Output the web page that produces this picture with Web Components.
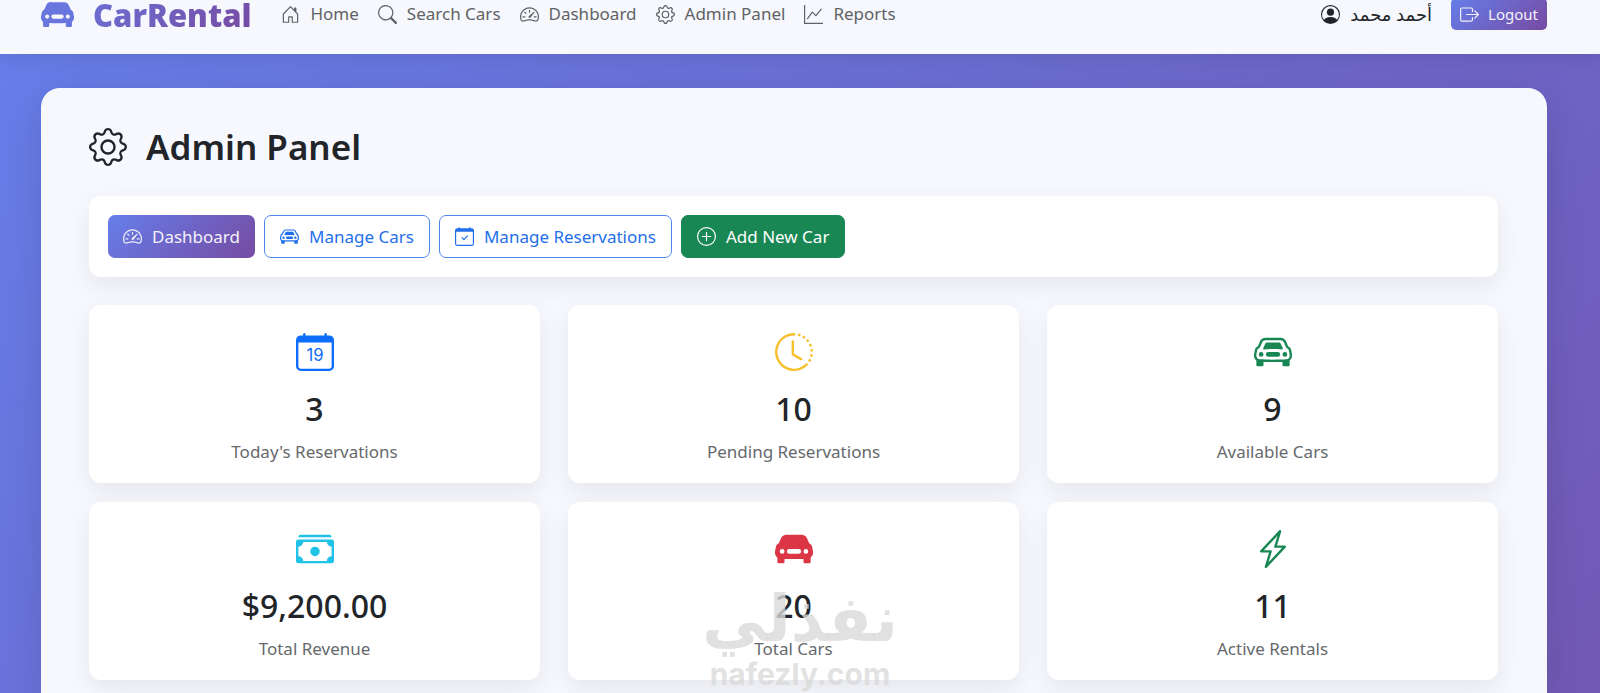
<!DOCTYPE html>
<html lang="en">
<head>
<meta charset="utf-8">
<meta name="viewport" content="width=device-width, initial-scale=1">
<title>CarRental – Admin Panel</title>
<style>
  html, body { margin: 0; }
  body {
    font-family: "Noto Sans", "Open Sans", "DejaVu Sans", sans-serif;
    font-size: 17px;
    line-height: 28px;
    color: #212529;
    background: #764ba2 linear-gradient(135deg, #667eea 0%, #764ba2 100%) 0 0 / 100% 1500px no-repeat;
  }
</style>
</head>
<body>
<rental-app></rental-app>

<script>
const CALENDAR = '<path d="M3.5 0a.5.5 0 0 1 .5.5V1h8V.5a.5.5 0 0 1 1 0V1h1a2 2 0 0 1 2 2v11a2 2 0 0 1-2 2H2a2 2 0 0 1-2-2V3a2 2 0 0 1 2-2h1V.5a.5.5 0 0 1 .5-.5M1 4v10a1 1 0 0 0 1 1h12a1 1 0 0 0 1-1V4z"/>';
const CAR_BODY = 'M2.52 3.515A2.5 2.5 0 0 1 4.82 2h6.362c1 0 1.904.596 2.298 1.515l.792 1.848c.075.175.21.319.38.404.5.25.855.715.965 1.262l.335 1.679q.05.242.049.49v.413c0 .814-.39 1.543-1 1.997V13.5a.5.5 0 0 1-.5.5h-2a.5.5 0 0 1-.5-.5v-1.338c-1.292.048-2.745.088-4 .088s-2.708-.04-4-.088V13.5a.5.5 0 0 1-.5.5h-2a.5.5 0 0 1-.5-.5v-1.892c-.61-.454-1-1.183-1-1.997v-.413a2.5 2.5 0 0 1 .049-.49l.335-1.68c.11-.546.465-1.012.964-1.261a.8.8 0 0 0 .381-.404l.792-1.848Z';
const ICONS = {
  house: '<path d="M8.354 1.146a.5.5 0 0 0-.708 0l-6 6A.5.5 0 0 0 1.5 7.5v7a.5.5 0 0 0 .5.5h4.5a.5.5 0 0 0 .5-.5v-4h2v4a.5.5 0 0 0 .5.5H14a.5.5 0 0 0 .5-.5v-7a.5.5 0 0 0-.146-.354L13 5.793V2.5a.5.5 0 0 0-.5-.5h-1a.5.5 0 0 0-.5.5v1.293zM2.5 14V7.707l5.5-5.5 5.5 5.5V14H10v-4a.5.5 0 0 0-.5-.5h-3a.5.5 0 0 0-.5.5v4z"/>',
  search: '<path d="M11.742 10.344a6.5 6.5 0 1 0-1.397 1.398h-.001q.044.06.098.115l3.85 3.85a1 1 0 0 0 1.415-1.414l-3.85-3.85a1 1 0 0 0-.115-.1zM12 6.5a5.5 5.5 0 1 1-11 0 5.5 5.5 0 0 1 11 0"/>',
  speedometer: '<path d="M8 4a.5.5 0 0 1 .5.5V6a.5.5 0 0 1-1 0V4.5A.5.5 0 0 1 8 4M3.732 5.732a.5.5 0 0 1 .707 0l.915.914a.5.5 0 1 1-.708.708l-.914-.915a.5.5 0 0 1 0-.707M2 10a.5.5 0 0 1 .5-.5h1.586a.5.5 0 0 1 0 1H2.5A.5.5 0 0 1 2 10m9.5 0a.5.5 0 0 1 .5-.5h1.5a.5.5 0 0 1 0 1H12a.5.5 0 0 1-.5-.5m.754-4.246a.39.39 0 0 0-.527-.02L7.547 9.31a.91.91 0 1 0 1.302 1.258l3.434-4.297a.39.39 0 0 0-.029-.518z"/><path fill-rule="evenodd" d="M0 10a8 8 0 1 1 15.547 2.661c-.442 1.253-1.845 1.602-2.932 1.25C11.309 13.488 9.475 13 8 13c-1.474 0-3.31.488-4.615.911-1.087.352-2.49.003-2.932-1.25A8 8 0 0 1 0 10m8-7a7 7 0 0 0-6.603 9.329c.203.575.923.876 1.68.63C4.397 12.533 6.358 12 8 12s3.604.532 4.923.96c.757.245 1.477-.056 1.68-.631A7 7 0 0 0 8 3"/>',
  gear: '<path d="M8 4.754a3.246 3.246 0 1 0 0 6.492 3.246 3.246 0 0 0 0-6.492M5.754 8a2.246 2.246 0 1 1 4.492 0 2.246 2.246 0 0 1-4.492 0"/><path d="M9.796 1.343c-.527-1.79-3.065-1.79-3.592 0l-.094.319a.873.873 0 0 1-1.255.52l-.292-.16c-1.64-.892-3.433.902-2.54 2.541l.159.292a.873.873 0 0 1-.52 1.255l-.319.094c-1.79.527-1.79 3.065 0 3.592l.319.094a.873.873 0 0 1 .52 1.255l-.16.292c-.892 1.64.901 3.434 2.541 2.54l.292-.159a.873.873 0 0 1 1.255.52l.094.319c.527 1.79 3.065 1.79 3.592 0l.094-.319a.873.873 0 0 1 1.255-.52l.292.16c1.64.893 3.434-.902 2.54-2.541l-.159-.292a.873.873 0 0 1 .52-1.255l.319-.094c1.79-.527 1.79-3.065 0-3.592l-.319-.094a.873.873 0 0 1-.52-1.255l.16-.292c.893-1.64-.902-3.433-2.541-2.54l-.292.159a.873.873 0 0 1-1.255-.52zm-2.633.283c.246-.835 1.428-.835 1.674 0l.094.319a1.873 1.873 0 0 0 2.693 1.115l.291-.16c.764-.415 1.6.42 1.184 1.185l-.159.292a1.873 1.873 0 0 0 1.116 2.692l.318.094c.835.246.835 1.428 0 1.674l-.319.094a1.873 1.873 0 0 0-1.115 2.693l.16.291c.415.764-.42 1.6-1.185 1.184l-.291-.159a1.873 1.873 0 0 0-2.693 1.116l-.094.318c-.246.835-1.428.835-1.674 0l-.094-.319a1.873 1.873 0 0 0-2.692-1.115l-.292.16c-.764.415-1.6-.42-1.184-1.185l.159-.291A1.873 1.873 0 0 0 1.945 8.93l-.319-.094c-.835-.246-.835-1.428 0-1.674l.319-.094A1.873 1.873 0 0 0 3.06 4.377l-.16-.292c-.415-.764.42-1.6 1.185-1.184l.292.159a1.873 1.873 0 0 0 2.692-1.115z"/>',
  graph: '<path fill-rule="evenodd" d="M0 0h1v15h15v1H0zm14.817 3.113a.5.5 0 0 1 .07.704l-4.5 5.5a.5.5 0 0 1-.74.037L7.06 6.767l-3.656 5.027a.5.5 0 0 1-.808-.588l4-5.5a.5.5 0 0 1 .758-.06l2.609 2.61 4.15-5.073a.5.5 0 0 1 .704-.07"/>',
  person: '<path d="M11 6a3 3 0 1 1-6 0 3 3 0 0 1 6 0"/><path fill-rule="evenodd" d="M0 8a8 8 0 1 1 16 0A8 8 0 0 1 0 8m8-7a7 7 0 0 0-5.468 11.37C3.242 11.226 4.805 10 8 10s4.757 1.225 5.468 2.37A7 7 0 0 0 8 1"/>',
  exit: '<path d="M10 12.5a.5.5 0 0 1-.5.5h-8a.5.5 0 0 1-.5-.5v-9a.5.5 0 0 1 .5-.5h8a.5.5 0 0 1 .5.5v2a.5.5 0 0 0 1 0v-2A1.5 1.5 0 0 0 9.5 2h-8A1.5 1.5 0 0 0 0 3.5v9A1.5 1.5 0 0 0 1.5 14h8a1.5 1.5 0 0 0 1.5-1.5v-2a.5.5 0 0 0-1 0z"/><path d="M15.854 8.354a.5.5 0 0 0 0-.708l-3-3a.5.5 0 0 0-.708.708L14.293 7.5H5.5a.5.5 0 0 0 0 1h8.793l-2.147 2.146a.5.5 0 0 0 .708.708z"/>',
  car: '<path d="M4 9a1 1 0 1 1-2 0 1 1 0 0 1 2 0m10 0a1 1 0 1 1-2 0 1 1 0 0 1 2 0M6 8a1 1 0 0 0 0 2h4a1 1 0 1 0 0-2zM4.862 4.276 3.906 6.19a.51.51 0 0 0 .497.731c.91-.073 2.35-.17 3.597-.17s2.688.097 3.597.17a.51.51 0 0 0 .497-.731l-.956-1.913A.5.5 0 0 0 10.691 4H5.309a.5.5 0 0 0-.447.276"/><path d="' + CAR_BODY + 'M4.82 3a1.5 1.5 0 0 0-1.379.91l-.792 1.847a1.8 1.8 0 0 1-.853.904.8.8 0 0 0-.43.564L1.03 8.904a1.5 1.5 0 0 0-.03.294v.413c0 .796.62 1.448 1.408 1.484 1.555.07 3.786.155 5.592.155s4.037-.084 5.592-.155A1.48 1.48 0 0 0 15 9.611v-.413q0-.148-.03-.294l-.335-1.68a.8.8 0 0 0-.43-.563 1.8 1.8 0 0 1-.853-.904l-.792-1.848A1.5 1.5 0 0 0 11.18 3z"/>',
  carfill: '<path d="' + CAR_BODY + 'M3 10a1 1 0 1 0 0-2 1 1 0 0 0 0 2m10 0a1 1 0 1 0 0-2 1 1 0 0 0 0 2M6 8a1 1 0 0 0 0 2h4a1 1 0 1 0 0-2z" fill-rule="evenodd"/>',
  check: CALENDAR + '<path d="M10.854 7.146a.5.5 0 0 1 0 .708l-3 3a.5.5 0 0 1-.708 0l-1.5-1.5a.5.5 0 1 1 .708-.708L7.5 9.793l2.646-2.647a.5.5 0 0 1 .708 0"/>',
  date: CALENDAR + '<text x="8" y="11.6" text-anchor="middle" font-family="Inter, sans-serif" font-size="7">19</text>',
  plus: '<path d="M8 15A7 7 0 1 1 8 1a7 7 0 0 1 0 14m0 1A8 8 0 1 0 8 0a8 8 0 0 0 0 16"/><path d="M8 4a.5.5 0 0 1 .5.5v3h3a.5.5 0 0 1 0 1h-3v3a.5.5 0 0 1-1 0v-3h-3a.5.5 0 0 1 0-1h3v-3A.5.5 0 0 1 8 4"/>',
  clock: '<path d="M8.515 1.019A7 7 0 0 0 8 1V0a8 8 0 0 1 .589.022zm2.004.45a7 7 0 0 0-.985-.299l.219-.976q.576.129 1.126.342zm1.37.71a7 7 0 0 0-.439-.27l.493-.87a8 8 0 0 1 .979.654l-.615.789a7 7 0 0 0-.418-.302zm1.834 1.79a7 7 0 0 0-.653-.796l.724-.69q.406.429.747.91zm.744 1.352a7 7 0 0 0-.214-.468l.893-.45a8 8 0 0 1 .45 1.088l-.95.313a7 7 0 0 0-.179-.483m.53 2.507a7 7 0 0 0-.1-1.025l.985-.17q.1.58.116 1.17zm-.131 1.538q.05-.254.081-.51l.993.123a8 8 0 0 1-.23 1.155l-.964-.267q.069-.247.12-.501m-.952 2.379q.276-.436.486-.908l.914.405q-.24.54-.555 1.038zm-.964 1.205q.183-.183.35-.378l.758.653a8 8 0 0 1-.401.432z"/><path d="M8 1a7 7 0 1 0 4.95 11.95l.707.707A8.001 8.001 0 1 1 8 0z"/><path d="M7.5 3a.5.5 0 0 1 .5.5v5.21l3.248 1.856a.5.5 0 0 1-.496.868l-3.5-2A.5.5 0 0 1 7 9V3.5a.5.5 0 0 1 .5-.5"/>',
  cash: '<path d="M1 3a1 1 0 0 1 1-1h12a1 1 0 0 1 1 1zm7 8a2 2 0 1 0 0-4 2 2 0 0 0 0 4"/><path d="M0 5a1 1 0 0 1 1-1h14a1 1 0 0 1 1 1v8a1 1 0 0 1-1 1H1a1 1 0 0 1-1-1zm3 0a2 2 0 0 1-2 2v4a2 2 0 0 1 2 2h10a2 2 0 0 1 2-2V7a2 2 0 0 1-2-2z"/>',
  bolt: '<path d="M11.251.068a.5.5 0 0 1 .227.58L9.677 6.5H13a.5.5 0 0 1 .364.843l-8 8.5a.5.5 0 0 1-.842-.49L6.323 9.5H3a.5.5 0 0 1-.364-.843l8-8.5a.5.5 0 0 1 .615-.09zM4.157 8.5H7a.5.5 0 0 1 .478.647L6.11 13.59l5.732-6.09H9a.5.5 0 0 1-.478-.647L9.89 2.41z"/>'
};

class BaseElement extends HTMLElement {
  connectedCallback() {
    if (this.shadowRoot) return;
    this.attachShadow({ mode: 'open' }).innerHTML = this.render();
  }
}

customElements.define('ui-icon', class extends BaseElement {
  render() {
    return `<style>
      :host { display: block; flex: none; width: var(--icon-size, 19px); height: var(--icon-size, 19px); }
      svg { display: block; width: 100%; height: 100%; overflow: visible; }
    </style><svg viewBox="0 0 16 16" fill="currentColor" aria-hidden="true">${ICONS[this.getAttribute('name')]}</svg>`;
  }
});

customElements.define('nav-link', class extends BaseElement {
  render() {
    return `<style>
      :host { display: block; }
      a { display: flex; align-items: center; gap: 10px; color: #5f6265; text-decoration: none; white-space: nowrap; }
    </style><a href="#${this.getAttribute('icon')}"><ui-icon name="${this.getAttribute('icon')}"></ui-icon><span><slot></slot></span></a>`;
  }
});

customElements.define('ui-button', class extends BaseElement {
  render() {
    return `<style>
      :host { display: block; }
      button {
        display: flex; align-items: center; gap: 10px; box-sizing: border-box;
        height: 43px; padding: 0 15px; margin: 0; border: 1px solid #4f86ee; border-radius: 7px;
        font: inherit; color: #1f6fea; background: transparent; white-space: nowrap; cursor: pointer;
      }
      :host([variant="primary"]) button { border: 0; color: #f3f1fb; background: linear-gradient(135deg, #667eea, #764ba2); }
      :host([variant="success"]) button { border-color: #198754; color: #fff; background: #198754; }
      :host([small]) button { height: 32px; padding: 0 9px; gap: 9px; font-size: 15px; border-radius: 5px; }
    </style><button type="button"><ui-icon name="${this.getAttribute('icon')}"></ui-icon><span><slot></slot></span></button>`;
  }
});

customElements.define('site-header', class extends BaseElement {
  render() {
    return `<style>
      :host {
        display: flex; align-items: center; box-sizing: border-box; height: 80px; margin-top: -26px;
        padding: 0 53px 0 41px; background: #f7f8fd; box-shadow: 0 2px 20px rgba(0, 0, 0, .12);
      }
      .brand { display: flex; align-items: center; gap: 19px; margin-right: 30px; text-decoration: none; }
      .brand ui-icon { --icon-size: 33px; color: #6876de; }
      .brand span {
        padding-top: 2px; font-size: 31px; line-height: 28px; font-weight: 900; color: transparent;
        background: linear-gradient(135deg, #6c6fd4, #764ba2); -webkit-background-clip: text; background-clip: text;
      }
      nav { display: flex; gap: 19px; }
      .account { display: flex; align-items: center; gap: 19px; margin-left: auto; }
      .user { display: flex; align-items: center; gap: 10px; font-size: 18px; white-space: nowrap; }
    </style>
    <a class="brand" href="#home"><ui-icon name="carfill"></ui-icon><span>CarRental</span></a>
    <nav>
      <nav-link icon="house">Home</nav-link>
      <nav-link icon="search">Search Cars</nav-link>
      <nav-link icon="speedometer">Dashboard</nav-link>
      <nav-link icon="gear">Admin Panel</nav-link>
      <nav-link icon="graph">Reports</nav-link>
    </nav>
    <div class="account">
      <div class="user"><ui-icon name="person"></ui-icon><span lang="ar" dir="rtl">أحمد محمد</span></div>
      <ui-button variant="primary" icon="exit" small>Logout</ui-button>
    </div>`;
  }
});

customElements.define('stat-card', class extends BaseElement {
  render() {
    return `<style>
      :host {
        display: flex; flex-direction: column; align-items: center; box-sizing: border-box; min-width: 0;
        padding: 28px 20px 17px; border-radius: 12px; background: #fff; box-shadow: 0 9px 24px rgba(0, 0, 0, .07);
      }
      ui-icon { --icon-size: 38px; color: var(--tone); }
      strong { margin-top: 18px; font-size: 32px; line-height: 40px; font-weight: 500; }
      .label { margin-top: 9px; color: #66696c; }
    </style>
    <ui-icon name="${this.getAttribute('icon')}"></ui-icon>
    <strong>${this.getAttribute('value')}</strong>
    <span class="label"><slot></slot></span>`;
  }
});

customElements.define('site-watermark', class extends BaseElement {
  render() {
    return `<style>
      :host {
        position: absolute; left: 50%; bottom: 0; transform: translateX(-50%); pointer-events: none;
        display: flex; flex-direction: column; align-items: center; color: rgba(218, 218, 218, .8); font-weight: 700;
      }
      .ar { font-family: "DejaVu Sans", sans-serif; font-size: 64px; line-height: 72px; }
      .en { font-family: Inter, sans-serif; font-size: 30px; line-height: 38px; }
    </style><span class="ar" lang="ar" dir="rtl">نفذلي</span><span class="en">nafezly.com</span>`;
  }
});

customElements.define('admin-panel', class extends BaseElement {
  render() {
    return `<style>
      :host {
        display: block; box-sizing: border-box; margin: 34px 53px 0 41px; padding: 35px 49px 13px 48px;
        border-radius: 19px 19px 0 0; background: #f7f8fd; box-shadow: 0 9px 38px rgba(0, 0, 0, .12);
      }
      h1 { display: flex; align-items: center; gap: 19px; margin: 0 0 25px; font-size: 35px; line-height: 48px; font-weight: 600; }
      h1 ui-icon { --icon-size: 38px; }
      .toolbar {
        display: flex; gap: 9px; padding: 19px; margin-bottom: 28px; border-radius: 12px;
        background: #fff; box-shadow: 0 9px 24px rgba(0, 0, 0, .07);
      }
      .stats { display: grid; grid-template-columns: repeat(3, 1fr); gap: 19px 28px; }
    </style>
    <h1><ui-icon name="gear"></ui-icon><span>Admin Panel</span></h1>
    <div class="toolbar">
      <ui-button variant="primary" icon="speedometer">Dashboard</ui-button>
      <ui-button icon="car">Manage Cars</ui-button>
      <ui-button icon="check">Manage Reservations</ui-button>
      <ui-button variant="success" icon="plus">Add New Car</ui-button>
    </div>
    <div class="stats">
      <stat-card icon="date" value="3" style="--tone:#0d6efd">Today's Reservations</stat-card>
      <stat-card icon="clock" value="10" style="--tone:#f5c02c">Pending Reservations</stat-card>
      <stat-card icon="car" value="9" style="--tone:#198754">Available Cars</stat-card>
      <stat-card icon="cash" value="$9,200.00" style="--tone:#1fc3e8">Total Revenue</stat-card>
      <stat-card icon="carfill" value="20" style="--tone:#dc3545">Total Cars</stat-card>
      <stat-card icon="bolt" value="11" style="--tone:#198754">Active Rentals</stat-card>
    </div>`;
  }
});

customElements.define('rental-app', class extends BaseElement {
  render() {
    return `<style>
      :host { display: flow-root; position: relative; min-height: 100vh; overflow: hidden; }
    </style>
    <site-header></site-header>
    <admin-panel></admin-panel>
    <site-watermark></site-watermark>`;
  }
});
</script>
</body>
</html>
